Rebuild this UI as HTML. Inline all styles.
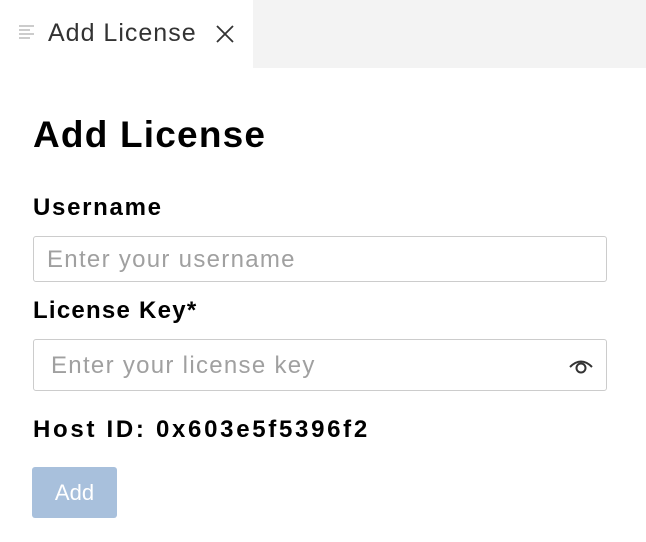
<!DOCTYPE html>
<html><head><style>
body{margin:0;width:646px;height:542px;background:#fff;font-family:"Liberation Sans",Arial,sans-serif;position:relative;overflow:hidden}
.tabbar{position:absolute;left:0;top:0;width:646px;height:68px;background:#f3f3f3}
.tab{position:absolute;left:0;top:0;width:253px;height:68px;background:#fff}
.tt{position:absolute;left:48px;top:19px;font-size:25px;color:#333;letter-spacing:1px}
.a{position:absolute;color:#000;font-weight:bold;white-space:nowrap}
.inp{position:absolute;left:33px;width:574px;border:1.5px solid #ccc;border-radius:3px;box-sizing:border-box;color:#a0a0a0;font-size:24px;letter-spacing:1.3px;white-space:nowrap}
</style></head><body>
<div class="tabbar"></div>
<div class="tab">
<svg style="position:absolute;left:19px;top:24px" width="16" height="16" viewBox="0 0 16 16"><g stroke="#bbb" stroke-width="1.5"><line x1="0" y1="2" x2="15" y2="2"/><line x1="0" y1="6" x2="11" y2="6"/><line x1="0" y1="10" x2="15" y2="10"/><line x1="0" y1="14" x2="11" y2="14"/></g></svg>
<div class="tt">Add License</div>
<svg style="position:absolute;left:215px;top:24px" width="20" height="20" viewBox="0 0 20 20"><path d="M2 2L18 18M18 2L2 18" stroke="#333" stroke-width="1.8"/></svg>
</div>
<div class="a" style="left:33px;top:114px;font-size:37px;letter-spacing:1.2px">Add License</div>
<div class="a" style="left:33px;top:194px;font-size:24px;letter-spacing:1.7px">Username</div>
<div class="inp" style="top:236px;height:46px;padding:9px 0 0 13px">Enter your username</div>
<div class="a" style="left:33px;top:297px;font-size:24px;letter-spacing:1.25px">License Key*</div>
<div class="inp" style="top:339px;height:52px;padding:12px 0 0 17px">Enter your license key</div>
<svg style="position:absolute;left:568px;top:358px" width="26" height="18" viewBox="0 0 26 18"><path d="M2 9Q13 -2 24 9" fill="none" stroke="#333" stroke-width="2"/><circle cx="13" cy="10" r="4.5" fill="none" stroke="#333" stroke-width="2"/></svg>
<div class="a" style="left:33px;top:416px;font-size:24px;letter-spacing:2.7px">Host ID: 0x603e5f5396f2</div>
<div style="position:absolute;left:32px;top:467px;width:85px;height:51px;background:#a8c0dc;border-radius:3px;color:#fff;font-size:22px;line-height:51px;text-align:center">Add</div>
</body></html>
